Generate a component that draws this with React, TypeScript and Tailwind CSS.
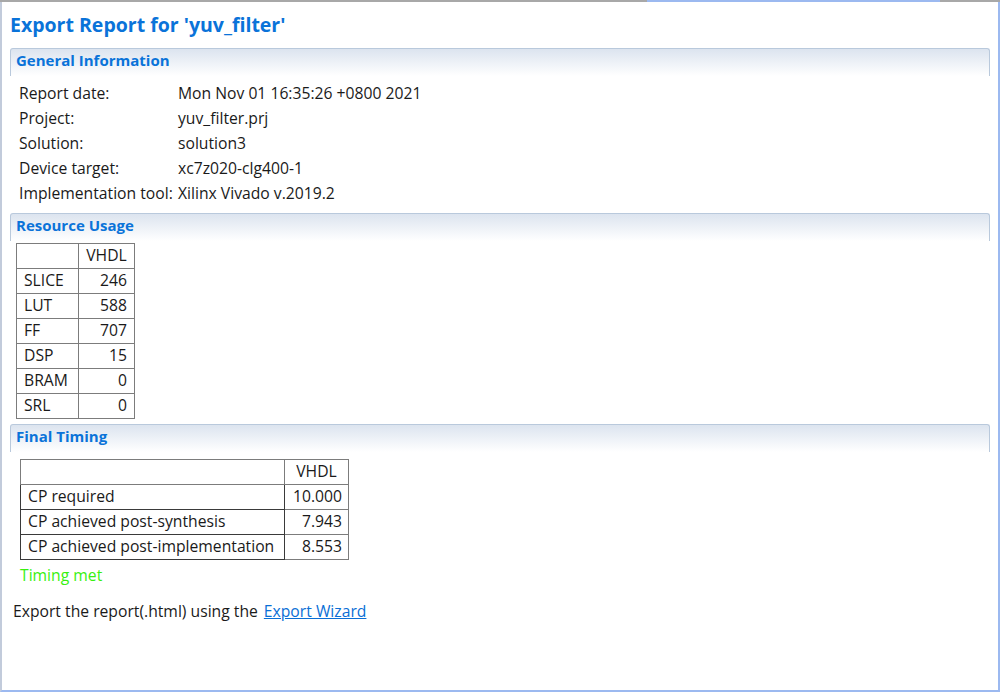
import React from 'react';

const font = { fontFamily: '"Open Sans", "Noto Sans", sans-serif' };

function SectionHeader({ title }: { title: string }) {
    return (
        <div className="mx-[8px] h-[28px] rounded-t-[3px] border-t border-l border-r border-[#b9c9dc] bg-gradient-to-b from-[#dce4ef] to-white pl-[5px] text-[15px] font-bold text-[#0a73d9]">
            {title}
        </div>
    );
}

const generalInfo = [
    ['Report date:', 'Mon Nov 01 16:35:26 +0800 2021'],
    ['Project:', 'yuv_filter.prj'],
    ['Solution:', 'solution3'],
    ['Device target:', 'xc7z020-clg400-1'],
    ['Implementation tool:', 'Xilinx Vivado v.2019.2'],
];

const resources = [
    ['SLICE', '246'],
    ['LUT', '588'],
    ['FF', '707'],
    ['DSP', '15'],
    ['BRAM', '0'],
    ['SRL', '0'],
];

const timing = [
    ['CP required', '10.000'],
    ['CP achieved post-synthesis', '7.943'],
    ['CP achieved post-implementation', '8.553'],
];

export default function App() {
    return (
        <div className="w-[1000px] h-[692px] bg-white text-[15.7px] text-[#1a1a1a] flex flex-col" style={font}>
            {/* top edge */}
            <div className="flex h-[2px] shrink-0">
                <div className="w-[647px] bg-[#a8a8a8]" />
                <div className="w-[293px] bg-[#9cb9f0]" />
                <div className="flex-1 bg-[#a8a8a8]" />
            </div>
            <div className="flex-1 flex border-l-2 border-l-[#c2cbdb] border-r-2 border-r-[#9cb9f0] border-b-2 border-b-[#9cb9f0]">
                <div className="flex-1 flex flex-col">
                    <div className="h-[46px] pl-[8px] pt-[10px] text-[19.5px] font-bold text-[#0a73d9] leading-[26px]">
                        Export Report for 'yuv_filter'
                    </div>

                    {/* General Information */}
                    <SectionHeader title="General Information" />
                    <div className="pl-[17px] pt-[5px] pb-[7px]">
                        {generalInfo.map(([k, v]) => (
                            <div key={k} className="flex h-[25px] items-center">
                                <div className="w-[159px] whitespace-nowrap">{k}</div>
                                <div>{v}</div>
                            </div>
                        ))}
                    </div>

                    {/* Resource Usage */}
                    <SectionHeader title="Resource Usage" />
                    <div className="pl-[14px] pt-[2px] pb-[5px]">
                        <table className="border-collapse">
                            <tbody>
                                <tr className="h-[25px]">
                                    <td className="w-[62px] border border-[#7c7c7c]" />
                                    <td className="w-[56px] border border-[#7c7c7c] text-center">VHDL</td>
                                </tr>
                                {resources.map(([k, v]) => (
                                    <tr key={k} className="h-[25px]">
                                        <td className="border border-[#7c7c7c] pl-[7px]">{k}</td>
                                        <td className="border border-[#7c7c7c] pr-[7px] text-right">{v}</td>
                                    </tr>
                                ))}
                            </tbody>
                        </table>
                    </div>

                    {/* Final Timing */}
                    <SectionHeader title="Final Timing" />
                    <div className="pl-[18px] pt-[7px]">
                        <table className="border-collapse">
                            <tbody>
                                <tr className="h-[25px]">
                                    <td className="w-[264px] border border-[#7c7c7c]" />
                                    <td className="w-[64px] border border-[#7c7c7c] text-center">VHDL</td>
                                </tr>
                                {timing.map(([k, v]) => (
                                    <tr key={k} className="h-[25px]">
                                        <td className="border border-[#3a3a3a] pl-[7px] whitespace-nowrap">{k}</td>
                                        <td className="border border-[#7c7c7c] pr-[6px] text-right">{v}</td>
                                    </tr>
                                ))}
                            </tbody>
                        </table>
                        <div className="h-[39px] pt-[4px] text-[#38f010]">Timing met</div>
                    </div>
                    <div className="pl-[11px] pt-[1px] flex gap-[6px]">
                        <span>Export the report(.html) using the</span>
                        <span className="text-[#0a6fd6] underline">Export Wizard</span>
                    </div>
                </div>
            </div>
        </div>
    );
}
